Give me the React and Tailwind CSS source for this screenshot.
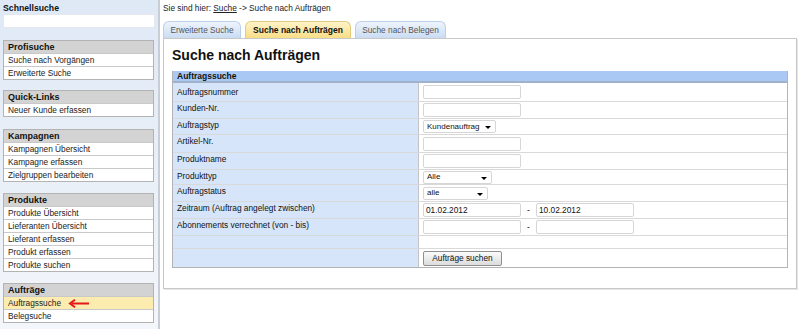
import React from "react";

const fontStack = "font-['Liberation_Sans',Arial,sans-serif]";

const sideBoxes = [
    { title: "Profisuche", mt: "mt-[12px]", items: ["Suche nach Vorgängen", "Erweiterte Suche"] },
    { title: "Quick-Links", mt: "mt-[10px]", items: ["Neuer Kunde erfassen"] },
    { title: "Kampagnen", mt: "mt-[12px]", items: ["Kampagnen Übersicht", "Kampagne erfassen", "Zielgruppen bearbeiten"] },
    {
        title: "Produkte",
        mt: "mt-[11px]",
        items: ["Produkte Übersicht", "Lieferanten Übersicht", "Lieferant erfassen", "Produkt erfassen", "Produkte suchen"],
    },
    { title: "Aufträge", mt: "mt-[11px]", items: ["Auftragssuche", "Belegsuche"], active: "Auftragssuche" },
];

const RedArrow = () => (
    <svg className="absolute left-[64px] top-[2px]" width="22" height="9" viewBox="0 0 22 9">
        <path d="M21 4.5 H4" stroke="#e3191b" strokeWidth="2" />
        <path d="M7 0.8 L2 4.5 L7 8.2" stroke="#e3191b" strokeWidth="2" fill="none" />
    </svg>
);

const SideBox = ({ box }) => (
    <div className={`${box.mt} border border-[#b3b3b3] bg-white`}>
        <div className="flex h-[12px] items-center bg-[#d3d3d3] pl-[4px] text-[9px] font-bold text-[#111]">{box.title}</div>
        {box.items.map((item) => (
            <div
                key={item}
                className={`relative flex h-[13px] items-center border-t border-[#c9c9c9] pl-[4px] text-[#222] ${
                    item === box.active ? "bg-[#fcecb0]" : "bg-white"
                }`}
            >
                {item}
                {item === box.active && <RedArrow />}
            </div>
        ))}
    </div>
);

const TextInput = ({ value = "" }) => (
    <div className="flex h-[14px] w-[98px] items-center rounded-[2px] border border-[#d6d6d6] bg-white pl-[2px] text-[#111]">
        {value}
    </div>
);

const SelectBox = ({ value, width }) => (
    <div
        className={`relative flex h-[13px] items-center rounded-[2px] border border-[#d6d6d6] bg-white pl-[3px] text-[8px] text-[#111] ${width}`}
    >
        {value}
        <span className="absolute right-[4px] top-[5px] h-0 w-0 border-x-[3px] border-t-[3px] border-x-transparent border-t-black" />
    </div>
);

const rows = [
    { label: "Auftragsnummer", h: "h-[19px]", lpad: "pt-[3px]", field: <TextInput /> },
    { label: "Kunden-Nr.", h: "h-[17px]", field: <TextInput /> },
    { label: "Auftragstyp", h: "h-[16px]", field: <SelectBox value="Kundenauftrag" width="w-[73px]" /> },
    { label: "Artikel-Nr.", h: "h-[18px]", field: <TextInput /> },
    { label: "Produktname", h: "h-[17px]", field: <TextInput /> },
    { label: "Produkttyp", h: "h-[15px]", field: <SelectBox value="Alle" width="w-[69px]" /> },
    { label: "Auftragstatus", h: "h-[17px]", field: <SelectBox value="alle" width="w-[65px]" /> },
    {
        label: "Zeitraum (Auftrag angelegt zwischen)",
        h: "h-[17px]",
        field: (
            <div className="flex items-center">
                <TextInput value="01.02.2012" />
                <span className="w-[15px] text-center">-</span>
                <TextInput value="10.02.2012" />
            </div>
        ),
    },
    {
        label: "Abonnements verrechnet (von - bis)",
        h: "h-[17px]",
        field: (
            <div className="flex items-center">
                <TextInput />
                <span className="w-[15px] text-center">-</span>
                <TextInput />
            </div>
        ),
    },
    { label: "", h: "h-[13px]", field: null },
    {
        label: "",
        h: "h-[18px]",
        field: (
            <button
                type="button"
                className="flex h-[15px] w-[79px] items-center justify-center rounded-[2px] border border-[#8f8f8f] bg-gradient-to-b from-[#fbfbfb] to-[#dcdcdc] text-[8.3px] text-[#111]"
            >
                Aufträge suchen
            </button>
        ),
    },
];

const App = () => {
    return (
        <div className={`flex h-[329px] w-[800px] overflow-hidden bg-white text-[8.3px] leading-[12px] text-black ${fontStack}`}>
            <aside className="h-full w-[160px] shrink-0 border-r-2 border-[#c9ced6] bg-gradient-to-b from-[#dfe9f6] to-[#f3f6fa] pl-[3px] pr-[4px] pt-[2px]">
                <div className="text-[8.7px] font-bold leading-[12px] text-[#111]">Schnellsuche</div>
                <div className="h-[14px] w-[152px] border border-[#e4e8ee] bg-white" />
                {sideBoxes.map((box) => (
                    <SideBox key={box.title} box={box} />
                ))}
            </aside>

            <main className="flex-1 pl-[3px] pr-[3px]">
                <div className="pt-[2px] text-[#222]">
                    Sie sind hier: <span className="underline">Suche</span> -&gt; Suche nach Aufträgen
                </div>

                <div className="mt-[7px] flex items-end gap-[4px]">
                    <div className="flex h-[17px] w-[78px] items-center justify-center rounded-t-[6px] border border-b-0 border-[#b9cfea] bg-gradient-to-b from-[#eef4fc] to-[#cadcf3] text-[#555]">
                        Erweiterte Suche
                    </div>
                    <div className="flex h-[17px] w-[106px] items-center justify-center rounded-t-[6px] border border-b-0 border-[#e2cb7a] bg-gradient-to-b from-[#fff3c8] to-[#f9dd86] text-[8.5px] font-bold text-[#111]">
                        Suche nach Aufträgen
                    </div>
                    <div className="flex h-[17px] w-[91px] items-center justify-center rounded-t-[6px] border border-b-0 border-[#b9cfea] bg-gradient-to-b from-[#eef4fc] to-[#cadcf3] text-[#555]">
                        Suche nach Belegen
                    </div>
                </div>

                <section className="h-[251px] w-[634px] border border-[#c8c8c8] px-[8px] shadow-[1px_1px_0_#e6e6e6]">
                    <h1 className="mt-[8px] text-[14px] font-bold leading-[17px] text-[#111]">Suche nach Aufträgen</h1>

                    <div className="mt-[7px] border border-t-0 border-[#b4b4b4]">
                        <div className="flex h-[12px] items-center border-b-2 border-[#9fb2c9] bg-[#a9c9f4] pl-[4px] text-[8.5px] font-bold text-[#111]">
                            Auftragssuche
                        </div>
                        {rows.map((row, i) => (
                            <div key={i} className={`grid grid-cols-[246px_1fr] border-b border-[#d9d9d9] last:border-b-0 ${row.h}`}>
                                <div className={`border-r border-[#c4c4c4] bg-[#d6e5f9] pl-[4px] text-[#111] ${row.lpad || ""}`}>
                                    {row.label}
                                </div>
                                <div className="flex items-center pl-[4px]">{row.field}</div>
                            </div>
                        ))}
                    </div>
                </section>
            </main>
        </div>
    );
};

export default App;
